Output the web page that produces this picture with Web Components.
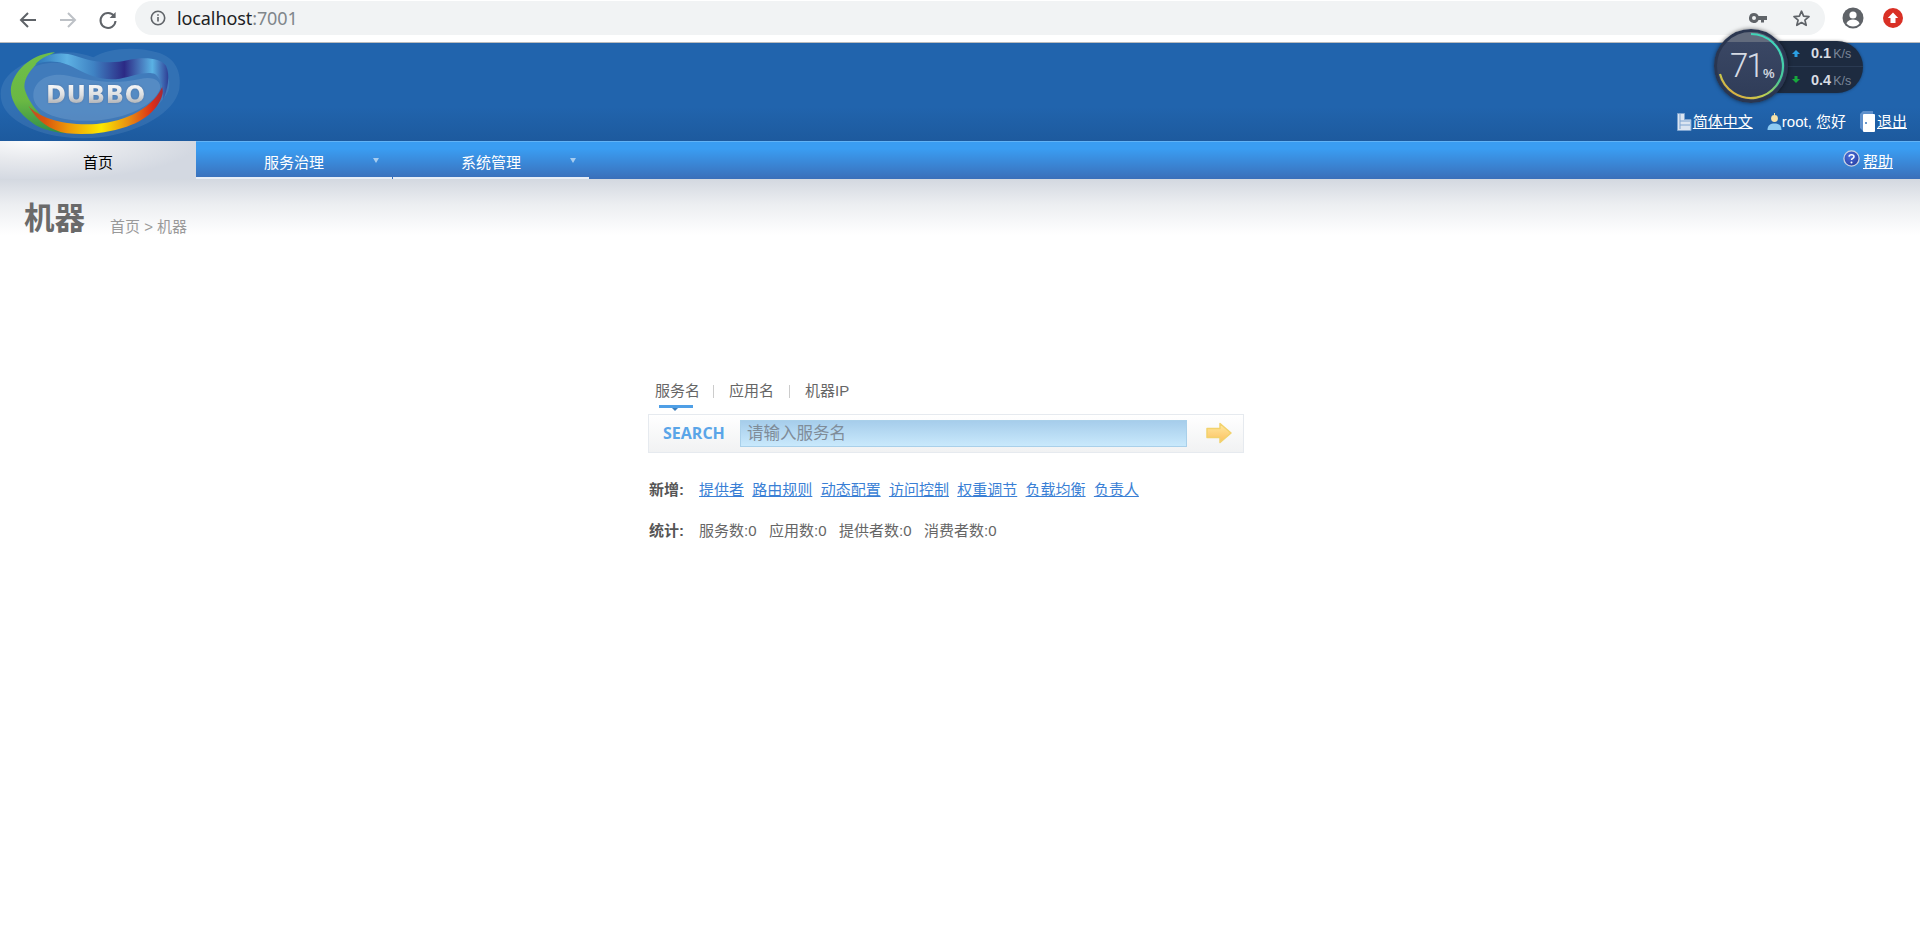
<!DOCTYPE html>
<html lang="zh"><head><meta charset="utf-8"><title>Dubbo</title>
<style>
html,body{margin:0;padding:0;background:#fff;}
body{font-family:"Liberation Sans","Noto Sans CJK SC",sans-serif;font-size:15px;color:#666;height:926px;overflow:hidden;}
</style></head><body>
<browser-bar></browser-bar>
<app-header></app-header>
<nav-bar></nav-bar>
<page-title></page-title>
<search-panel></search-panel>
<net-widget></net-widget>
<script>
function def(name,html){customElements.define(name,class extends HTMLElement{constructor(){super();this.attachShadow({mode:'open'}).innerHTML=html;}});}
def('browser-bar',`<style>
:host{display:flex;align-items:center;height:42px;border-bottom:1px solid #b9bbbd;background:#fff;position:relative;}
svg{display:block;flex:none}
.nav{display:flex;align-items:center;margin-left:18px;gap:20px;margin-top:-3px}
.omni{flex:1;height:34px;margin:-6px 0 0 17px;background:#f1f3f4;border-radius:17px;display:flex;align-items:center;padding-left:15px;min-width:0}
.url{font:18px "Noto Sans",sans-serif;color:#202124;margin-left:11px;letter-spacing:-.1px}
.url span{color:#80868b}
.end{margin-left:auto;display:flex;align-items:center;gap:25px;padding-right:14px}
.ext{display:flex;align-items:center;gap:19px;margin:-6px 17px 0 17px}
</style>
<div class="nav">
<svg width="20" height="20" viewBox="0 0 20 20"><path d="M18 10H3.500M10 3 3 10l7 7" fill="none" stroke="#5f6368" stroke-width="2"/></svg>
<svg width="20" height="20" viewBox="0 0 20 20"><path d="M2 10h14.500M10 3l7 7-7 7" fill="none" stroke="#bdc1c6" stroke-width="2"/></svg>
<svg width="20" height="20" viewBox="0 0 20 20"><path d="M16.200 6.200A7.500 7.500 0 1 0 17.500 11" fill="none" stroke="#5f6368" stroke-width="2"/><path d="M17.600 2v6h-6z" fill="#5f6368"/></svg>
</div>
<div class="omni">
<svg width="16" height="16" viewBox="0 0 16 16"><circle cx="8" cy="8" r="6.700" fill="none" stroke="#5f6368" stroke-width="1.600"/><path d="M7.200 7h1.600v4.600H7.200zM7.200 4.200h1.600v1.600H7.200z" fill="#5f6368"/></svg>
<div class="url">localhost<span>:7001</span></div>
<div class="end">
<svg width="18" height="10" viewBox="0 0 18 10"><path d="M5 0a5 5 0 1 0 4.600 7H12v2.500h3V7h3V3H9.600A5 5 0 0 0 5 0zm0 3a2 2 0 1 1 0 4 2 2 0 0 1 0-4z" fill="#5f6368"/></svg>
<svg width="19" height="18" viewBox="0 0 19 18"><path d="M9.500 2.200l2.100 5 5.400.4-4.100 3.500 1.300 5.200-4.700-2.800-4.700 2.800 1.300-5.200L2 7.600l5.400-.4z" fill="none" stroke="#5f6368" stroke-width="1.700" stroke-linejoin="round"/></svg>
</div></div>
<div class="ext">
<svg width="22" height="22" viewBox="0 0 22 22"><circle cx="11" cy="11" r="10.500" fill="#5f6368"/><circle cx="11" cy="8" r="3.600" fill="#fff"/><path d="M4.400 16.300c1.500-2.700 4.200-3.700 6.600-3.700s5.100 1 6.600 3.700A8.500 8.500 0 0 1 11 19.500a8.500 8.500 0 0 1-6.600-3.200z" fill="#fff"/></svg>
<svg width="20" height="20" viewBox="0 0 20 20"><circle cx="10" cy="10" r="10" fill="#d93025"/><path d="M10 4.500 15.200 10H12.500v5h-5v-5H4.800z" fill="#fff"/></svg>
</div>`);

def('dubbo-logo',`<style>
:host{display:block;position:relative;width:190px;height:97px;flex:none;overflow:hidden}
svg{position:absolute;left:0;top:0}
.t{position:absolute;left:46px;top:38px;font:bold 24px/26px "DejaVu Sans",sans-serif;letter-spacing:.7px;background:linear-gradient(#f4f5f6 15%,#dcdee0 50%,#aeb1b5 85%);-webkit-background-clip:text;background-clip:text;color:transparent;filter:drop-shadow(0 0 1px rgba(70,90,130,.45))}
</style>
<svg width="190" height="97" viewBox="0 0 570 291">
<defs>
<linearGradient id="bot" gradientUnits="userSpaceOnUse" x1="85" x2="490" y1="0" y2="0"><stop offset="0" stop-color="#b8502a"/><stop offset=".12" stop-color="#d9540f"/><stop offset=".3" stop-color="#ee9a08"/><stop offset=".54" stop-color="#fbe800"/><stop offset=".74" stop-color="#e88f10"/><stop offset=".92" stop-color="#dc2d18"/><stop offset="1" stop-color="#a02a3a"/></linearGradient>
<linearGradient id="top" gradientUnits="userSpaceOnUse" x1="105" x2="505" y1="0" y2="0"><stop offset="0" stop-color="#2a74b8"/><stop offset=".24" stop-color="#5db1e3"/><stop offset=".44" stop-color="#3f82c3"/><stop offset=".67" stop-color="#2c2a85"/><stop offset=".88" stop-color="#5ab2e4"/><stop offset="1" stop-color="#2e3f95"/></linearGradient>
<linearGradient id="grn" x1="0" x2="0" y1="0" y2="1"><stop offset="0" stop-color="#6fbf4a"/><stop offset=".6" stop-color="#6ab843"/><stop offset="1" stop-color="#2f8f4a"/></linearGradient>
</defs>
<path d="M2 150C2 100 50 62 130 35 190 18 240 25 280 40 320 15 400 5 470 25 530 40 545 90 538 135 525 205 420 265 300 280 200 290 110 270 50 230 15 205 2 180 2 150z" fill="#a9c6e4" opacity=".13"/>
<path d="M40 130C50 80 130 45 200 60 260 75 330 85 420 65 480 55 520 90 505 140 480 200 380 250 280 258 150 265 30 210 40 130z" fill="#8fb6dd" opacity=".16"/>
<path d="M100 150C105 105 150 85 205 95 255 105 330 125 420 105 460 95 485 110 480 135 460 185 380 225 280 230 180 235 95 205 100 150z" fill="#7fa9d6" opacity=".34"/>
<path d="M165 25C105 28 45 70 33 130 28 170 60 215 110 245 140 260 170 265 195 268 140 235 90 190 74 135 68 95 110 50 165 25z" fill="url(#grn)"/>
<path d="M85 185C115 220 190 246 290 240 380 232 465 190 490 120 495 175 450 225 380 248 320 268 260 274 200 268 150 258 110 230 85 185z" fill="url(#bot)"/>
<path d="M105 62C130 30 180 20 225 35 270 52 330 62 385 48 430 38 480 40 498 65 512 95 503 135 488 172 492 140 485 105 465 90 440 80 400 95 360 104 310 112 270 95 230 75 190 52 145 45 105 62z" fill="url(#top)"/>
</svg><div class="t">DUBBO</div>`);

def('app-header',`<style>
:host{display:flex;justify-content:space-between;align-items:flex-end;height:98px;background:linear-gradient(#2164ad 0,#2164ad 65%,#1d5a9e 100%);position:relative}
dubbo-logo{align-self:flex-start;margin-top:1px}
.links{display:flex;align-items:center;color:#fff;font-size:15px;line-height:20px;padding:0 13px 8px 0}
a{color:#fff;text-decoration:underline}
.i{display:flex;align-items:center}
svg{display:block;flex:none}
</style><dubbo-logo></dubbo-logo>
<div class="links">
<div class="i"><svg width="15" height="18" viewBox="0 0 15 18" style="margin-right:1px"><path d="M.5.5h7v6H14v11H.500z" fill="#dbe5f1" stroke="#7ea4d0"/><path d="M3 1v15M3 8h10M3 12h10" stroke="#7ea4d0" fill="none"/></svg><a href="#">简体中文</a></div>
<div class="i" style="margin-left:14px"><svg width="15" height="18" viewBox="0 0 15 18"><circle cx="7.500" cy="5.500" r="3.400" fill="#f6e2a8"/><path d="M7.500 0v2" stroke="#f6e2a8"/><path d="M.5 17c0-5 3-6.500 7-6.500s7 1.500 7 6.500z" fill="#8ccaf2"/></svg><span>root, 您好</span></div>
<div class="i" style="margin-left:14px"><svg width="16" height="22" viewBox="0 0 16 22" style="margin-right:1px"><path d="M0 3l3-3h10v20H3l-3-3z" fill="#5f90cc"/><rect x="3" y="3" width="12" height="18" rx="1" fill="#fff"/><circle cx="6" cy="12" r="1" fill="#3d78bd"/></svg><a href="#">退出</a></div>
</div>`);

def('nav-bar',`<style>
:host{display:flex;height:38px;background:linear-gradient(#3a9df2 0,#3a9df2 20%,#3a6fb9 100%);box-shadow:inset 0 1px 0 #62b3f6;position:relative;font-size:15px;color:#fff}
.tab{width:196px;height:38px;display:flex;align-items:center;justify-content:center;box-sizing:border-box;position:relative}
.home{color:#000;padding-top:3px;background:radial-gradient(ellipse 170px 40px at 30px 0,#fafbfc 0,#e8eaee 45%,#d3d8e1 100%)}
.m{border-bottom:2px solid #e8eef6;padding-top:5px}
.m+.m{margin-left:1px}
.m::after{content:"";position:absolute;right:13px;top:17px;border:3.500px solid transparent;border-top:5px solid #a7cdf0;border-bottom:0}
.sp{flex:1}
.help{display:flex;align-items:center;padding:1px 27px 0 0}
a{color:#fff;text-decoration:underline}
svg{display:block;margin-right:3px}
</style>
<div class="tab home">首页</div><div class="tab m">服务治理</div><div class="tab m">系统管理</div><div class="sp"></div>
<div class="help"><svg width="17" height="17" viewBox="0 0 17 17" style="margin-top:-4px"><defs><radialGradient id="q" cx=".4" cy=".35" r=".8"><stop offset="0" stop-color="#4a70dc"/><stop offset="1" stop-color="#24389c"/></radialGradient></defs><circle cx="8.500" cy="8.500" r="7.600" fill="url(#q)" stroke="#c9d2e2" stroke-width="1.300"/><path d="M6 6.700c.3-2.600 5-2.600 5 0 0 1.700-2.500 1.700-2.500 3.300" fill="none" stroke="#fff" stroke-width="1.500"/><circle cx="8.500" cy="12.400" r="1" fill="#fff"/></svg><a href="#">帮助</a></div>`);

def('page-title',`<style>
:host{display:flex;align-items:flex-start;height:56px;padding:20px 0 0 24px;box-sizing:border-box;background:linear-gradient(#d3d8e0 0,#eceef1 45%,#fff 100%)}
h1{margin:-2px 0 0;font-size:30.500px;line-height:43px;font-weight:bold;color:#6a6a6a}
.c{font-size:15px;color:#999;margin:18px 0 0 25px;line-height:20px}
</style><h1>机器</h1><div class="c">首页 &gt; 机器</div>`);

def('search-panel',`<style>
:host{display:block;width:596px;margin:139px 0 0 648px;font-size:15px;color:#666}
.tabs{display:flex;align-items:center;height:34px;padding-left:7px;line-height:20px}
.sep{width:1px;height:13px;background:#ccc;margin:0 15px}
.sep.a{margin-left:13px}
.on{position:relative}
.on::after{content:"";position:absolute;left:4px;right:7px;top:24px;height:3px;background:#4f9fe6}
.on::before{content:"";position:absolute;left:17px;top:27px;border:3px solid transparent;border-top:3px solid #3c7fbb;border-bottom:0}
.box{height:39px;box-sizing:border-box;border:1px solid #e6eaef;background:linear-gradient(#fff,#f1f2f3);display:flex;align-items:center;margin-top:6px;padding-bottom:1px}
.s{font:bold 16px "Open Sans",sans-serif;color:#5aa5e8;width:91px;padding-left:14px;box-sizing:border-box;flex:none}
.in{width:447px;height:27px;box-sizing:border-box;border:1px solid #a9d0ea;background:linear-gradient(#a6cdeb,#c9e9fc);color:#7f8c99;font-size:16.500px;line-height:25px;padding-left:6px;flex:none}
svg{display:block;margin-left:19px;flex:none}
.row{display:flex;align-items:center;line-height:20px}
.r1{margin-top:27px}.r2{margin-top:21px}
b{width:51px;flex:none;color:#555;box-sizing:border-box;padding-left:1px}
a{color:#3a7fd5;text-decoration:underline;margin-right:8.300px}
span{margin-right:12.500px}
</style>
<div class="tabs"><div class="on">服务名</div><div class="sep a"></div><div>应用名</div><div class="sep"></div><div>机器IP</div></div>
<div class="box"><div class="s">SEARCH</div><div class="in">请输入服务名</div>
<svg width="26" height="22" viewBox="0 0 26 22"><defs><linearGradient id="a" x1="0" y1="0" x2="0" y2="1"><stop offset="0" stop-color="#ffe9a0"/><stop offset="1" stop-color="#fcc060"/></linearGradient></defs><path d="M1 6.500h13V1.500L25 11 14 20.500V15.500H1z" fill="url(#a)" stroke="#f2d26c" stroke-width="1.500" stroke-linejoin="round"/></svg></div>
<div class="row r1"><b>新增:</b><a href="#">提供者</a><a href="#">路由规则</a><a href="#">动态配置</a><a href="#">访问控制</a><a href="#">权重调节</a><a href="#">负载均衡</a><a href="#">负责人</a></div>
<div class="row r2"><b>统计:</b><span>服务数:0</span><span>应用数:0</span><span>提供者数:0</span><span>消费者数:0</span></div>`);

def('net-widget',`<style>
:host{display:block;position:absolute;left:1714px;top:29px;width:149px;height:75px;font-family:"Liberation Sans",sans-serif}
.pill{position:absolute;left:40px;top:12px;right:0;height:52px;background:#1d2b40;border-radius:26px;box-shadow:0 0 3px rgba(0,0,0,.4)}
.pill::after{content:"";position:absolute;left:20px;right:0;top:25px;height:1px;background:#2a3a52}
.c{position:absolute;left:0;top:0;width:74px;height:74px;box-sizing:border-box;border:3px solid #2a3650;border-radius:50%;background:linear-gradient(#626b7d 0,#626b7d 14%,#3a4764 15%,#2f3c58 100%);box-shadow:0 0 4px rgba(0,0,0,.55)}
svg{position:absolute;left:0;top:0}
.n{position:absolute;left:16px;top:19px;font:300 33px/36px Roboto,sans-serif;color:#d6dbe4;letter-spacing:-2px}
.p{position:absolute;left:49px;top:38px;font-size:13px;font-weight:bold;line-height:14px;color:#cfd5de}
.sp{position:absolute;left:97px;font-size:14.500px;font-weight:bold;line-height:16px;color:#d8dce3;white-space:nowrap}
.sp i{font-style:normal;font-weight:normal;font-size:12.500px;color:#7b8698;margin-left:2px}
</style>
<div class="pill"></div>
<div class="c"></div>
<svg width="149" height="75" viewBox="0 0 149 75"><defs><linearGradient id="g" gradientUnits="userSpaceOnUse" x1="50" y1="5" x2="12" y2="68"><stop offset="0" stop-color="#3fd6bd"/><stop offset=".45" stop-color="#4ac894"/><stop offset=".72" stop-color="#c2d04e"/><stop offset="1" stop-color="#e3a23e"/></linearGradient></defs>
<path d="M37 5A32 32 0 1 1 6 45" fill="none" stroke="url(#g)" stroke-width="2.200"/>
<path d="M78 25l4-4 4 4h-2.500v3h-3v-3z" fill="#2ba0e4"/><path d="M78 50l4 4 4-4h-2.500v-3h-3v3z" fill="#17a83c"/></svg>
<div class="n">71</div><div class="p">%</div>
<div class="sp" style="top:16px">0.1<i>K/s</i></div><div class="sp" style="top:43px">0.4<i>K/s</i></div>`);
</script>
</body></html>
